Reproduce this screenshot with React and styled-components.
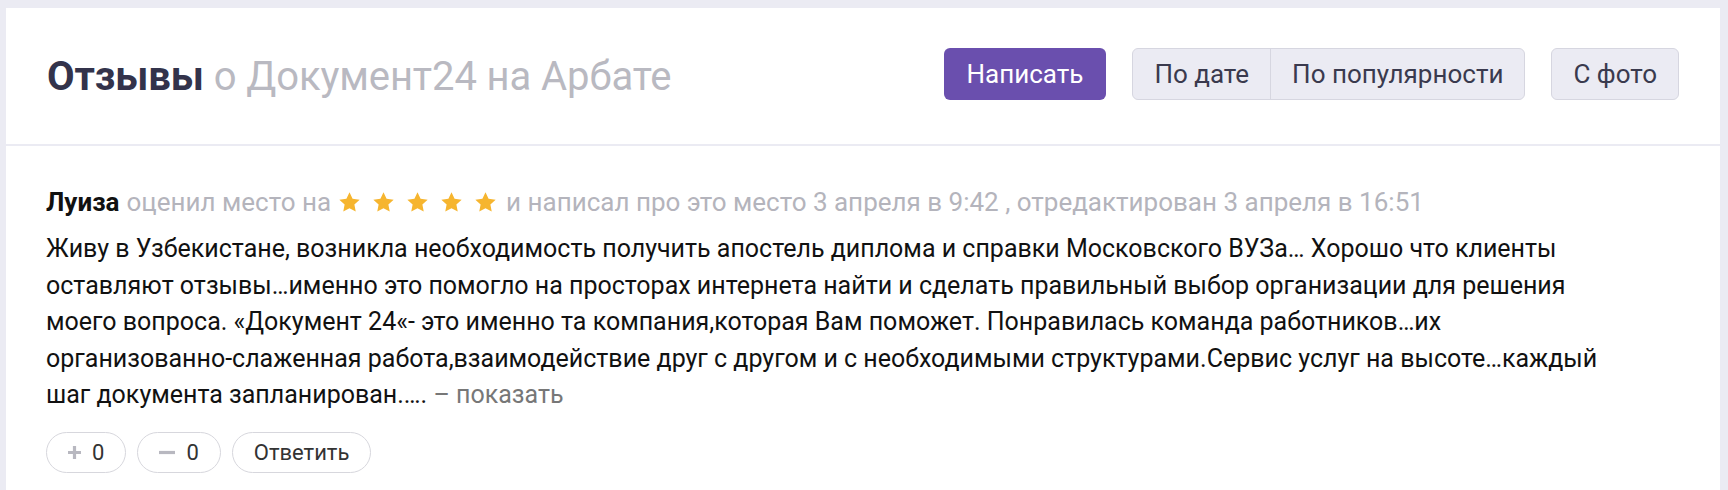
import React from "react";
import styled, { createGlobalStyle } from "styled-components";

const GlobalStyle = createGlobalStyle`
  html, body {
    margin: 0;
    padding: 0;
    background: #ebebf3;
  }
  body {
    padding: 8px 8px 0 6px;
    font-family: Roboto, "Liberation Sans", Arial, sans-serif;
    -webkit-font-smoothing: antialiased;
  }
`;

const Card = styled.div`
  background: #fff;
  min-height: 600px;
`;

const Header = styled.div`
  display: flex;
  align-items: center;
  height: 138px;
  padding: 0 41px;
  border-bottom: 2px solid #ebebf3;
  box-sizing: border-box;
`;

const Title = styled.h1`
  flex: 1;
  margin: 0;
  font-size: 40px;
  font-weight: 700;
  color: #33334b;
  letter-spacing: -0.1px;
  span {
    font-weight: 400;
    color: #b9b9c1;
  }
`;

const Actions = styled.div`
  display: flex;
  align-items: center;
  gap: 26px;
  padding-bottom: 4px;
`;

const PrimaryButton = styled.button`
  height: 52px;
  padding: 0 23px;
  border: none;
  border-radius: 6px;
  background: #6a4fae;
  color: #fff;
  font-family: inherit;
  font-size: 26px;
`;

const Group = styled.div`
  display: flex;
  height: 52px;
  border: 1.5px solid #d6d6e0;
  border-radius: 6px;
  background: #ebebf3;
  box-sizing: border-box;
  overflow: hidden;
`;

const GroupItem = styled.button`
  padding: 0 21px;
  border: none;
  border-left: ${(p) => (p.first ? "none" : "1.5px solid #d6d6e0")};
  background: transparent;
  color: #3a3a4e;
  font-family: inherit;
  font-size: 26px;
`;

const Review = styled.div`
  padding: 38px 120px 0 40px;
`;

const Meta = styled.div`
  display: flex;
  align-items: center;
  white-space: nowrap;
  font-size: 26px;
  line-height: 36px;
  color: #b4b4bc;
  b {
    color: #111;
    font-weight: 700;
    margin-right: 7px;
  }
`;

const Stars = styled.span`
  display: inline-flex;
  gap: 11px;
  margin: 0 9px 0 7px;
`;

const Text = styled.p`
  margin: 11px 0 0;
  font-size: 25px;
  line-height: 36.5px;
  color: #111;
`;

const NoBreak = styled.span`
  white-space: nowrap;
`;

const More = styled.a`
  color: #777;
`;

const Buttons = styled.div`
  display: flex;
  gap: 11px;
  margin-top: 18px;
`;

const Pill = styled.button`
  display: flex;
  align-items: center;
  gap: 11px;
  height: 41px;
  padding: 0 21px;
  border: 1.5px solid #d7d7dd;
  border-radius: 21px;
  background: #fff;
  color: #333;
  font-family: inherit;
  font-size: 22px;
`;

const Star = () => (
  <svg width="23" height="23" viewBox="0 0 24 24">
    <path
      d="M12 1.4l3.2 6.8 7.4.9-5.5 5.1 1.4 7.3L12 17.9l-6.5 3.6 1.4-7.3-5.5-5.1 7.4-.9z"
      fill="#f6b52f"
    />
  </svg>
);

const Plus = () => (
  <svg width="13" height="13" viewBox="0 0 13 13">
    <path d="M6.5 0v13M0 6.5h13" stroke="#b8b8c0" strokeWidth="3.2" />
  </svg>
);

const Minus = () => (
  <svg width="16" height="13" viewBox="0 0 16 13">
    <path d="M0 6.5h16" stroke="#b8b8c0" strokeWidth="3.2" />
  </svg>
);

export default function App() {
  return (
    <>
      <GlobalStyle />
      <Card>
        <Header>
          <Title>
            Отзывы <span>о Документ24 на Арбате</span>
          </Title>
          <Actions>
            <PrimaryButton>Написать</PrimaryButton>
            <Group>
              <GroupItem first>По дате</GroupItem>
              <GroupItem>По популярности</GroupItem>
            </Group>
            <Group>
              <GroupItem first>С фото</GroupItem>
            </Group>
          </Actions>
        </Header>
        <Review>
          <Meta>
            <b>Луиза</b> оценил место на
            <Stars>
              {[0, 1, 2, 3, 4].map((i) => (
                <Star key={i} />
              ))}
            </Stars>
            и написал про это место 3 апреля в 9:42 , отредактирован 3 апреля в 16:51
          </Meta>
          <Text>
            Живу в Узбекистане, возникла необходимость получить апостель диплома и справки Московского ВУЗа… Хорошо что клиенты оставляют отзывы…именно это помогло на просторах интернета найти и сделать правильный выбор организации для решения моего вопроса. «Документ 24«- это именно та компания,которая Вам поможет. Понравилась команда работников…их{" "}
            <NoBreak>организованно-слаженная</NoBreak> работа,взаимодействие друг с другом и с необходимыми структурами.Сервис услуг на{" "}
            <NoBreak>высоте…каждый</NoBreak> шаг документа запланирован.….{" "}
            <More>– показать</More>
          </Text>
          <Buttons>
            <Pill>
              <Plus />0
            </Pill>
            <Pill>
              <Minus />0
            </Pill>
            <Pill>Ответить</Pill>
          </Buttons>
        </Review>
      </Card>
    </>
  );
}
